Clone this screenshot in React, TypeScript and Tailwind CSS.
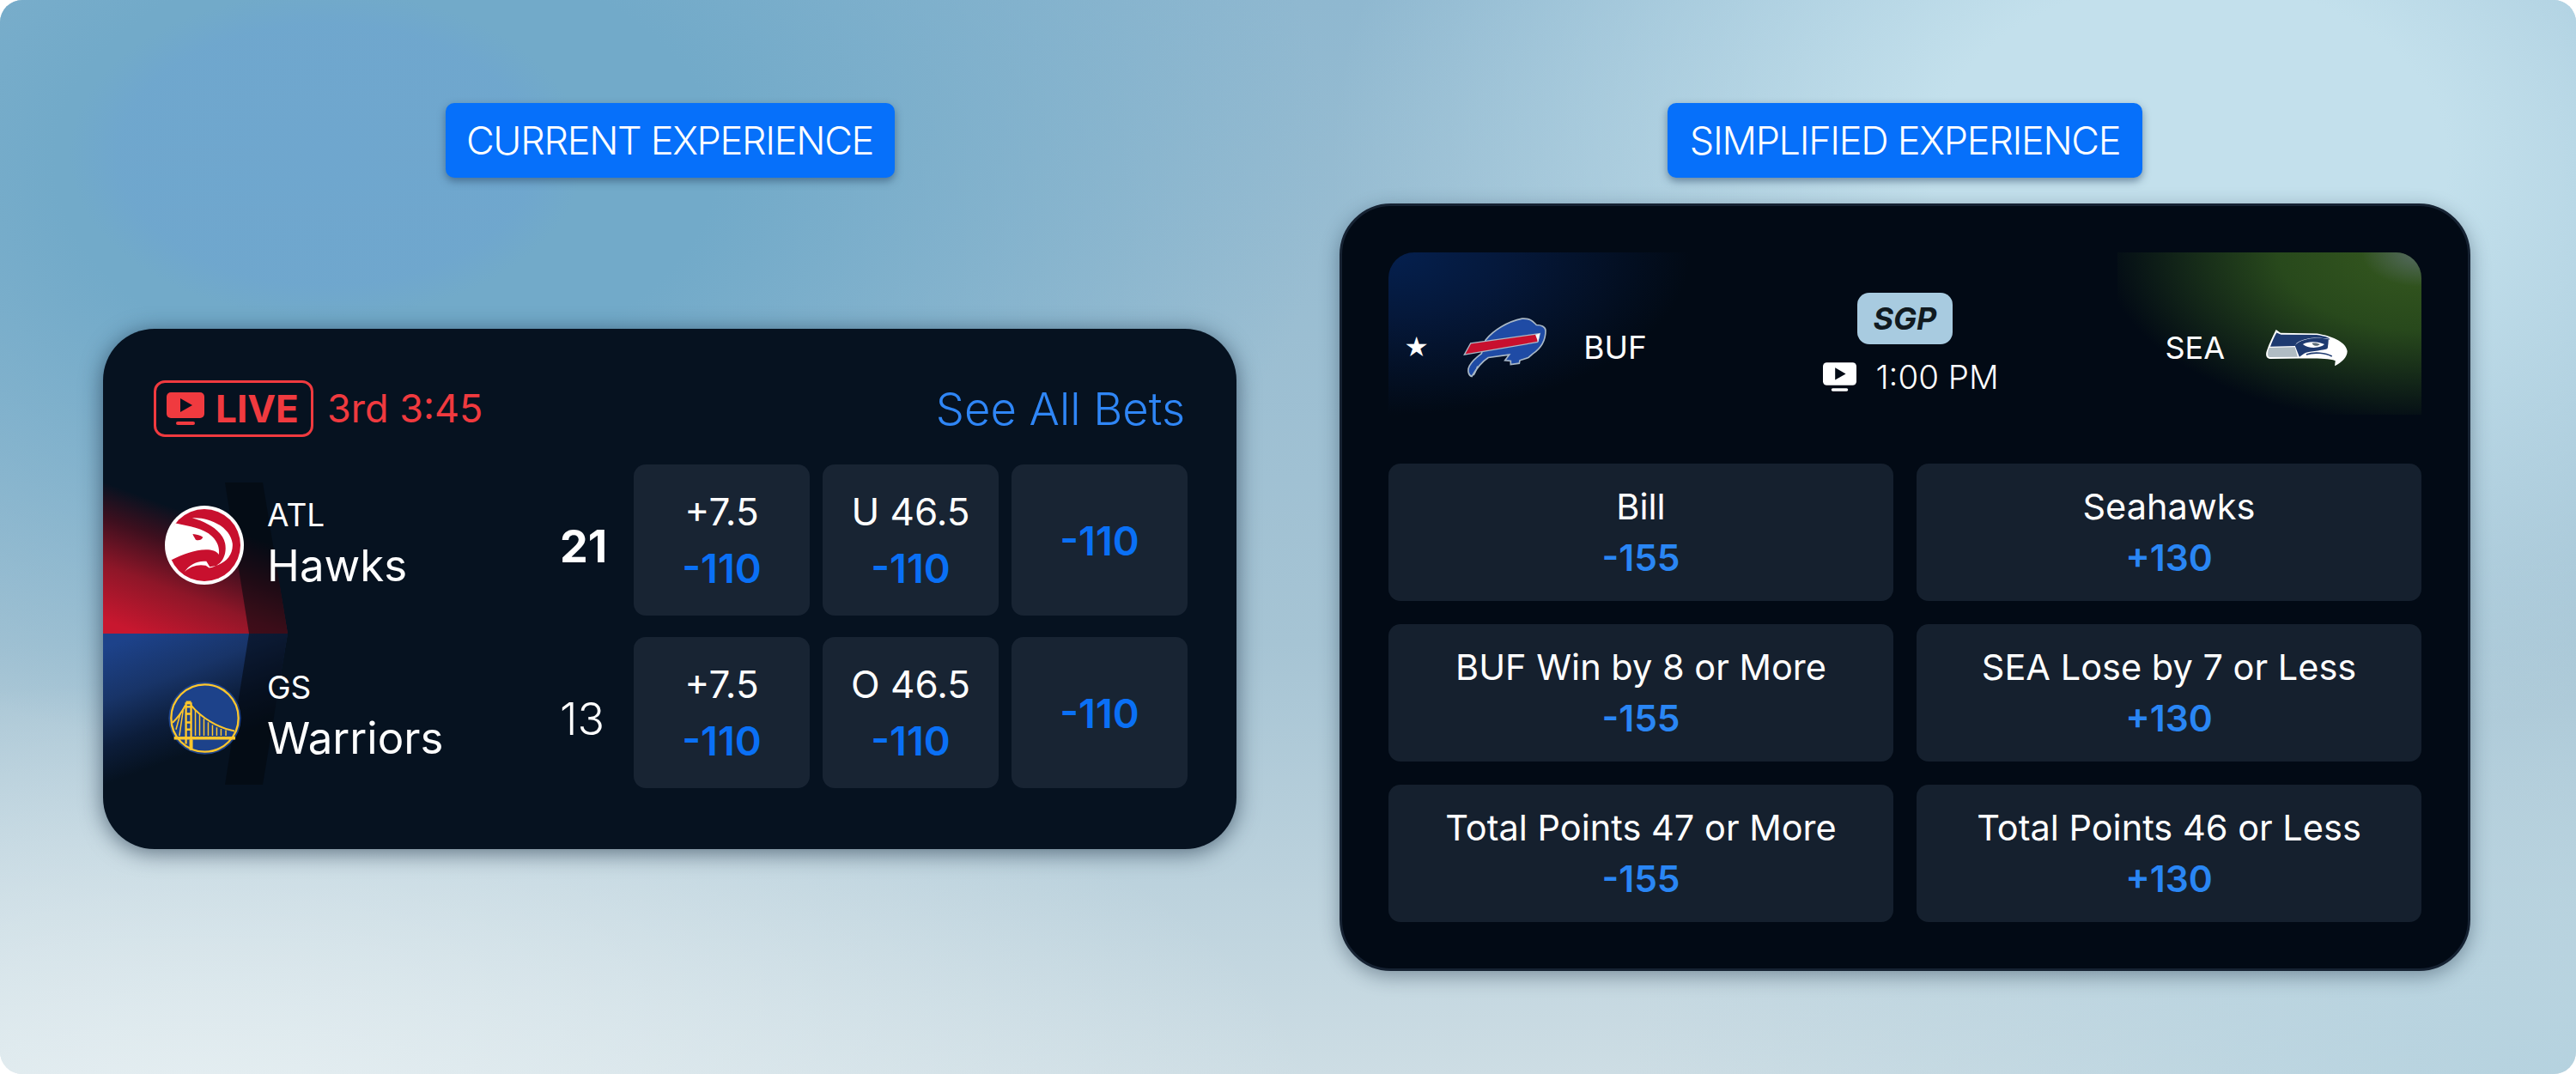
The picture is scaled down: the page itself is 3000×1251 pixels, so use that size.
import React from 'react'

const font = { fontFamily: 'Inter, "Liberation Sans", sans-serif' }

const TvIcon = ({ className, fill, cut }: { className: string; fill: string; cut: string }) => (
    <svg viewBox="0 0 44 38" className={className}>
        <rect x="0" y="0" width="44" height="30" rx="5" fill={fill} />
        <path d="M16 7 L30 15 L16 23 Z" fill={cut} />
        <rect x="11" y="34" width="22" height="4" rx="2" fill={fill} />
    </svg>
)

const HawksLogo = () => (
    <svg viewBox="60 57 278 278" className="w-[92px] h-[92px]">
        <circle cx="199" cy="196" r="139" fill="#ffffff" />
        <circle cx="199" cy="196" r="127" fill="#c8102e" />
        <path d="M66 196 C66 165 80 138 98 119 C145 130 195 135 226 165 C245 183 253 205 250 229 C241 216 226 212 205 212 C165 212 120 230 83 248 C72 232 66 214 66 196 Z" fill="#ffffff" />
        <path d="M156 100 C216 96 290 132 298 190 C302 235 266 268 218 272 L206 253 C172 250 146 266 129 290 C150 270 178 262 204 268 L216 276 C258 272 280 232 272 190 C262 145 210 115 156 100 Z" fill="#ffffff" />
        <path d="M158 157 C172 158 186 162 194 168 C190 178 176 182 168 176 C165 170 160 164 158 157 Z" fill="#c8102e" />
    </svg>
)

const WarriorsLogo = () => (
    <svg viewBox="73 72 256 256" className="w-[85px] h-[85px]">
        <circle cx="201" cy="200" r="127" fill="#1d428a" />
        <circle cx="201" cy="200" r="118" fill="none" stroke="#ffc72c" strokeWidth="7" />
        <g stroke="#ffc72c" fill="none">
            <path d="M135 145 L135 290 M153 145 L153 310 M135 160 L153 160 M135 185 L153 185 M135 215 L153 215 M135 240 L153 240" strokeWidth="7" />
            <path d="M135 146 L153 146" strokeWidth="12" />
            <path d="M153 155 C190 200 250 235 305 245" strokeWidth="6" />
            <path d="M133 155 C120 180 105 200 88 216" strokeWidth="6" />
            <path d="M168 172 L168 262 M183 188 L183 262 M198 202 L198 262 M213 214 L213 262 M228 224 L228 262 M243 232 L243 262 M258 238 L258 262 M275 242 L275 262 M125 172 L112 262 M115 185 L100 240" strokeWidth="4.5" />
            <path d="M93 270 L308 270" strokeWidth="11" />
            <path d="M153 275 L153 312" strokeWidth="12" />
        </g>
    </svg>
)

const BillsLogo = () => (
    <svg viewBox="304 84 294 212" className="w-[98px] h-[71px]">
        <path d="M382 165 C410 130 460 100 510 90 C540 88 548 100 560 112 C575 112 592 118 592 132 C592 165 580 190 548 212 L532 226 L502 236 L500 246 L470 250 L470 238 L450 236 L465 216 L392 226 C370 240 352 262 334 292 C322 288 318 270 326 255 C335 238 350 225 368 212 Z" fill="#1f4ba5" stroke="#a9b8c6" strokeWidth="5" />
        <path d="M354 256 C350 270 346 280 340 288" fill="none" stroke="#a9b8c6" strokeWidth="4" />
        <path d="M308 216 L330 176 L572 142 L564 172 Z" fill="#c8102e" stroke="#a9b8c6" strokeWidth="4" />
        <path d="M556 146 L572 142 L566 172 Z" fill="#f4f6f8" />
    </svg>
)

const SeahawksLogo = () => (
    <svg viewBox="118 94 292 132" className="w-[97px] h-[44px]">
        <path d="M156 97 L172 108 L300 110 C345 118 400 135 406 172 C406 195 385 212 362 224 L364 206 C340 197 300 198 240 198 L136 199 C122 199 118 185 124 170 C132 145 145 120 156 97 Z" fill="#ffffff" />
        <path d="M158 107 L174 114 L298 115 C330 120 340 124 345 130 C300 122 260 124 228 144 L222 154 L136 156 C142 138 150 122 158 107 Z" fill="#1e3a70" />
        <path d="M132 160 L222 158 L232 192 L134 193 C126 193 125 178 132 160 Z" fill="#b0bcc3" />
        <path d="M222 152 C245 128 300 120 345 132 L336 164 C310 172 270 172 255 180 L238 192 Z" fill="#1e3a70" />
        <path d="M250 148 C270 135 305 138 326 148 C312 162 270 165 250 148 Z" fill="#ffffff" />
        <path d="M282 144 C292 142 304 144 310 148 C304 156 288 156 282 144 Z" fill="#5b6b76" />
        <path d="M340 132 C370 138 398 155 400 180 C396 195 380 204 368 212 L364 198 C340 185 290 182 258 190 C285 172 320 172 338 164 Z" fill="#ffffff" />
        <path d="M262 184 C290 174 330 178 352 190" fill="none" stroke="#1e3a70" strokeWidth="5" />
    </svg>
)

const CurrentCell = ({ line, price }: { line?: string; price: string }) => (
    <div className="w-[205px] h-[176px] rounded-[14px] bg-[#182433] flex flex-col items-center justify-center gap-[20px]">
        {line && <div className="text-[44px] leading-[45px] text-white">{line}</div>}
        <div className="text-[47px] leading-[45px] font-semibold text-[#0a70f5]">{price}</div>
    </div>
)

const TeamRow = ({ logo, abbr, name, score, bold, cells }: { logo: React.ReactNode; abbr: string; name: string; score: string; bold?: boolean; cells: { line?: string; price: string }[] }) => (
    <div className="flex items-center h-[176px] pl-[72px]">
        <div className="w-[92px] mt-[12px] flex justify-center">{logo}</div>
        <div className="ml-[27px] mt-[10px] w-[341px] flex flex-col">
            <div className="text-[37px] leading-[44px] text-white">{abbr}</div>
            <div className="text-[51px] leading-[62px] text-white mt-[6px]">{name}</div>
        </div>
        <div className={`w-[74px] mt-[16px] text-[52px] leading-[60px] text-white ${bold ? 'font-bold' : 'font-light'}`}>{score}</div>
        <div className="ml-[12px] flex gap-[15px]">
            {cells.map((c, i) => <CurrentCell key={i} {...c} />)}
        </div>
    </div>
)

const Tile = ({ label, price }: { label: string; price: string }) => (
    <div className="h-[160px] rounded-[14px] bg-[#15202e] flex flex-col items-center justify-center gap-[22px]">
        <div className="text-[41.5px] leading-[38px] text-white">{label}</div>
        <div className="text-[42.5px] leading-[38px] font-semibold text-[#2a86f4]">{price}</div>
    </div>
)

const Label = ({ children, className }: { children: React.ReactNode; className: string }) => (
    <div className={`h-[87px] rounded-[10px] bg-[#0670fa] flex items-center justify-center text-[45px] font-light text-white tracking-[-1.3px] shadow-[0_4px_10px_rgba(40,70,100,0.55)] ${className}`}>
        {children}
    </div>
)

const tiles = [
    ['Bill', '-155'],
    ['Seahawks', '+130'],
    ['BUF Win by 8 or More', '-155'],
    ['SEA Lose by 7 or Less', '+130'],
    ['Total Points 47 or More', '-155'],
    ['Total Points 46 or Less', '+130'],
]

export default function App() {
    return (
        <div className="w-[3000px] h-[1251px] bg-white" style={font}>
            <div className="relative w-full h-full overflow-hidden rounded-[26px] bg-[linear-gradient(180deg,#8fb8d0_0%,#a6c4d4_60%,#cddde4_100%)]">
                <div className="absolute inset-0 bg-[radial-gradient(300px_190px_at_380px_180px,rgba(108,163,211,0.5)_0%,rgba(108,163,211,0.45)_80%,rgba(108,163,211,0)_100%),radial-gradient(1100px_700px_at_15%_15%,#72aac9_0%,#72aac9_35%,rgba(114,170,201,0)_100%),radial-gradient(1000px_700px_at_85%_15%,#c3e0ec_0%,#c3e0ec_30%,rgba(195,224,236,0)_100%),radial-gradient(1300px_520px_at_8%_105%,#e6eff2_0%,rgba(230,239,242,0)_100%),radial-gradient(1100px_600px_at_100%_100%,#b5d2df_0%,rgba(181,210,223,0)_100%)]" />

                <div className="relative flex pl-[120px] pt-[120px] gap-[120px]">
                    <div className="w-[1320px] flex flex-col items-center">
                        <Label className="w-[523px]">CURRENT EXPERIENCE</Label>
                        <div className="relative mt-[176px] h-[606px] w-full rounded-[60px] bg-[#061220] overflow-hidden shadow-[0_4px_26px_rgba(20,40,60,0.6)]">
                            <svg viewBox="0 0 1320 606" className="absolute inset-0 w-full h-full">
                                <defs>
                                    <linearGradient id="redFade" gradientUnits="userSpaceOnUse" x1="40" y1="352" x2="100" y2="190">
                                        <stop offset="0" stopColor="#c8172f" />
                                        <stop offset="0.35" stopColor="#8e1628" />
                                        <stop offset="0.65" stopColor="#3d0f1e" />
                                        <stop offset="0.875" stopColor="#061220" />
                                    </linearGradient>
                                    <linearGradient id="blueFade" gradientUnits="userSpaceOnUse" x1="40" y1="352" x2="100" y2="510">
                                        <stop offset="0" stopColor="#1d428a" />
                                        <stop offset="0.35" stopColor="#183468" />
                                        <stop offset="0.65" stopColor="#0c1d3a" />
                                        <stop offset="0.89" stopColor="#061220" />
                                    </linearGradient>
                                </defs>
                                <g transform="translate(3 3)">
                                    <path d="M-3 176 L183 176 L212 352 L-3 352 Z" fill="url(#redFade)" />
                                    <path d="M-3 352 L212 352 L183 528 L-3 528 Z" fill="url(#blueFade)" />
                                    <path d="M139 176 L183 176 L212 352 L183 528 L139 528 L167 352 Z" fill="#03080f" fillOpacity="0.6" />
                                </g>
                            </svg>
                            <div className="relative pt-[60px]">
                                <div className="flex items-center justify-between h-[66px] pl-[59px] pr-[60px]">
                                    <div className="flex items-center">
                                        <div className="w-[186px] h-[66px] rounded-[13px] border-[3px] border-[#f03a3f] flex items-center pl-[12px] gap-[13px]">
                                            <TvIcon className="w-[44px] h-[38px]" fill="#f03a3f" cut="#061220" />
                                            <span className="text-[44px] leading-none font-bold text-[#f03a3f]">LIVE</span>
                                        </div>
                                        <span className="ml-[16px] text-[45px] text-[#f03a3f]">3rd 3:45</span>
                                    </div>
                                    <span className="text-[52.5px] text-[#2f86f6] font-light">See All Bets</span>
                                </div>
                                <div className="mt-[32px] flex flex-col gap-[25px]">
                                    <TeamRow logo={<HawksLogo />} abbr="ATL" name="Hawks" score="21" bold cells={[{ line: '+7.5', price: '-110' }, { line: 'U 46.5', price: '-110' }, { price: '-110' }]} />
                                    <TeamRow logo={<WarriorsLogo />} abbr="GS" name="Warriors" score="13" cells={[{ line: '+7.5', price: '-110' }, { line: 'O 46.5', price: '-110' }, { price: '-110' }]} />
                                </div>
                            </div>
                        </div>
                    </div>

                    <div className="w-[1317px] flex flex-col items-center">
                        <Label className="w-[553px]">SIMPLIFIED EXPERIENCE</Label>
                        <div className="mt-[30px] h-[894px] w-full rounded-[60px] bg-[#020a15] border-[3px] border-[#162232] shadow-[0_6px_22px_rgba(20,40,60,0.4)] px-[54px] pt-[54px]">
                            <div className="relative h-[189px] rounded-t-[30px] overflow-hidden flex items-center">
                                <div className="absolute inset-y-0 left-0 w-[352px] bg-[radial-gradient(ellipse_352px_189px_at_0%_0%,#05204f_0%,#05183a_40%,rgba(2,10,21,0)_100%)]" />
                                <div className="absolute inset-y-0 right-0 w-[354px] bg-[radial-gradient(70px_40px_at_100%_0%,#566a66_0%,rgba(86,106,102,0)_100%),radial-gradient(ellipse_370px_200px_at_100%_0%,#36591f_0%,#28491c_45%,rgba(2,10,21,0)_100%)]" />
                                <div className="relative w-full flex items-center justify-between">
                                    <div className="w-[420px] flex items-center pl-[18px] mt-[32px]">
                                        <span className="text-[28px] leading-none text-white">★</span>
                                        <div className="ml-[40px]"><BillsLogo /></div>
                                        <span className="ml-[42px] text-[37px] text-white">BUF</span>
                                    </div>
                                    <div className="flex flex-col items-center mt-[22px]">
                                        <div className="w-[111px] h-[60px] rounded-[14px] bg-[#a8cbe0] flex items-center justify-center text-[36px] font-bold italic text-[#111a20]">SGP</div>
                                        <div className="flex items-center mt-[18px] pl-[14px] gap-[22px]">
                                            <TvIcon className="w-[39px] h-[34px]" fill="#ffffff" cut="#020a15" />
                                            <span className="text-[38.5px] leading-[40px] font-light text-white">1:00 PM</span>
                                        </div>
                                    </div>
                                    <div className="w-[420px] flex items-center justify-end pr-[85px] mt-[32px]">
                                        <span className="text-[36px] text-white">SEA</span>
                                        <div className="ml-[47px]"><SeahawksLogo /></div>
                                    </div>
                                </div>
                            </div>
                            <div className="mt-[57px] grid grid-cols-2 gap-x-[27px] gap-y-[27px]">
                                {tiles.map(([label, price]) => <Tile key={label} label={label} price={price} />)}
                            </div>
                        </div>
                    </div>
                </div>
            </div>
        </div>
    )
}
